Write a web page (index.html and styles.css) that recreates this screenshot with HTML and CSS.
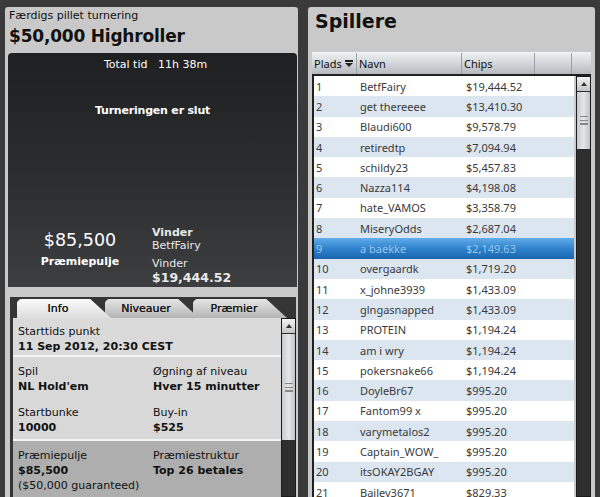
FILE: index.html
```html
<!doctype html>
<html lang="da">
<head>
    <meta charset="UTF-8">
    <title>$50,000 Highroller</title>
    <link rel="stylesheet" href="styles.css">
</head>
<body>
<div class="app">
    <div class="left">
        <div class="head">
            <div class="status">Færdigs pillet turnering</div>
            <h1>$50,000 Highroller</h1>
        </div>
        <div class="board">
            <div class="total">Total tid&nbsp;&nbsp; 11h 38m</div>
            <div class="over">Turneringen er slut</div>
            <div class="result">
                <div class="pool">
                    <div class="amount">$85,500</div>
                    <div class="b">Præmiepulje</div>
                </div>
                <div class="winner">
                    <div class="b">Vinder</div>
                    <div>BetfFairy</div>
                    <div class="gap">Vinder</div>
                    <div class="b big">$19,444.52</div>
                </div>
            </div>
        </div>
        <div class="tabs">
            <div class="tab active">Info</div>
            <div class="tab">Niveauer</div>
            <div class="tab">Præmier</div>
        </div>
        <div class="info">
            <div class="sections">
                <div class="sec first">
                    <div class="cell">
                        <span>Starttids punkt</span>
                        <b>11 Sep 2012, 20:30 CEST</b>
                    </div>
                </div>
                <div class="sec grid">
                    <div class="cell"><span>Spil</span><b>NL Hold'em</b></div>
                    <div class="cell"><span>Øgning af niveau</span><b>Hver 15 minutter</b></div>
                    <div class="cell"><span>Startbunke</span><b>10000</b></div>
                    <div class="cell"><span>Buy-in</span><b>$525</b></div>
                </div>
                <div class="sec grid dark">
                    <div class="cell"><span>Præmiepulje</span><b>$85,500</b><span>($50,000 guaranteed)</span></div>
                    <div class="cell"><span>Præmiestruktur</span><b>Top 26 betales</b></div>
                </div>
            </div>
            <div class="scroll small">
                <div class="up"></div>
                <div class="thumb"><i></i></div>
            </div>
        </div>
    </div>
    <div class="right">
        <h2>Spillere</h2>
        <div class="table">
            <div class="thead">
                <div class="th c1">Plads <span class="sort"></span></div>
                <div class="th c2">Navn</div>
                <div class="th c3">Chips</div>
                <div class="th c4"></div>
                <div class="th c5"></div>
            </div>
            <div class="tbody">
                <div class="rows" id="rows"></div>
                <div class="scroll">
                    <div class="up"></div>
                    <div class="thumb"><i></i></div>
                </div>
            </div>
        </div>
    </div>
</div>
<script>
    let players = [
        ["BetfFairy", "$19,444.52"], ["get thereeee", "$13,410.30"], ["Blaudi600", "$9,578.79"],
        ["retiredtp", "$7,094.94"], ["schildy23", "$5,457.83"], ["Nazza114", "$4,198.08"],
        ["hate_VAMOS", "$3,358.79"], ["MiseryOdds", "$2,687.04"], ["a baekke", "$2,149.63"],
        ["overgaardk", "$1,719.20"], ["x_johne3939", "$1,433.09"], ["glngasnapped", "$1,433.09"],
        ["PROTEIN", "$1,194.24"], ["am i wry", "$1,194.24"], ["pokersnake66", "$1,194.24"],
        ["DoyleBr67", "$995.20"], ["Fantom99 x", "$995.20"], ["varymetalos2", "$995.20"],
        ["Captain_WOW_", "$995.20"], ["itsOKAY2BGAY", "$995.20"], ["Bailey3671", "$829.33"]
    ];
    let rows = document.getElementById("rows");
    for (let i = 0; i < players.length; i++) {
        let cls = "row";
        if (i % 2 === 1) cls += " alt";
        if (i === 8) cls += " sel";
        rows.innerHTML += `<div class="${cls}"><span class="c1">${i + 1}</span><span class="c2">${players[i][0]}</span><span class="c3">${players[i][1]}</span></div>`;
    }
</script>
</body>
</html>
```

FILE: styles.css
```css
* {
    box-sizing: border-box;
}

body {
    margin: 0;
    background: #3a3a3a;
    font-family: "DejaVu Sans", Verdana, sans-serif;
    color: #111;
}

.app {
    display: flex;
    gap: 10px;
    padding: 7px 5px 0 5px;
    height: 497px;
    overflow: hidden;
}

.left {
    width: 293px;
    background: #c9c9c9;
    border-radius: 3px 3px 0 0;
    display: flex;
    flex-direction: column;
}

.head {
    padding: 2px 4px 0 4px;
    height: 46px;
}

.status {
    font-size: 11px;
    line-height: 14px;
}

h1 {
    margin: 0;
    font-size: 17px;
    font-weight: bold;
    letter-spacing: -0.2px;
    line-height: 26px;
}

.board {
    margin: 0 1px 0 3px;
    height: 234px;
    border-radius: 4px 4px 0 0;
    background: linear-gradient(#1f2021, #2b2c2e 50%, #3d3e40);
    color: #fff;
    display: flex;
    flex-direction: column;
    font-size: 11px;
}

.total {
    text-align: center;
    padding-top: 5px;
    padding-left: 6px;
}

.over {
    text-align: center;
    font-weight: bold;
    margin-top: 33px;
    letter-spacing: -0.2px;
}

.result {
    margin-top: auto;
    display: flex;
    padding-bottom: 1px;
}

.pool {
    width: 144px;
    text-align: center;
    padding-top: 4px;
}

.amount {
    font-size: 17.5px;
    line-height: 20px;
}

.pool .b {
    margin-top: 5px;
}

.b {
    font-weight: bold;
}

.winner {
    color: #e8e8e8;
    line-height: 13px;
}

.winner .gap {
    margin-top: 5px;
}

.winner .big {
    font-size: 12.5px;
    line-height: 16px;
}

.tabs {
    margin: 10px 2px 0 5px;
    height: 21px;
    background: #353535;
    display: flex;
    padding-left: 7px;
    padding-top: 2px;
}

.tab {
    width: 94px;
    margin-right: -6px;
    font-size: 11px;
    text-align: center;
    padding-top: 3px;
    padding-right: 12px;
    color: #1a1a1a;
    text-shadow: 0 0 0.4px #1a1a1a;
    background: linear-gradient(#e6e6e6, #b4b4b4);
    clip-path: polygon(0 3px, 3px 0, 78% 0, 100% 100%, 0 100%);
    border-radius: 4px 0 0 0;
}

.tab.active {
    background: linear-gradient(#fafafa, #dedede);
    position: relative;
    z-index: 1;
}

.info {
    flex: 1;
    margin: 0 2px 0 5px;
    border-left: 3px solid #353535;
    display: flex;
    min-height: 0;
}

.sections {
    flex: 1;
    display: flex;
    flex-direction: column;
}

.sec {
    padding: 6px 0 0 5px;
    font-size: 11px;
    border-bottom: 2px solid #f4f4f4;
    background: #d8d8d8;
}

.sec.first {
    height: 39px;
    background: #dadada;
}

.grid {
    display: grid;
    grid-template-columns: 135px 1fr;
    row-gap: 6px;
    height: 84px;
    padding-top: 7px;
}

.sec.dark {
    background: #aeaeae;
    flex: 1;
    border-bottom: 0;
}

.cell {
    display: flex;
    flex-direction: column;
    line-height: 15px;
}

.scroll {
    width: 15px;
    background: #2e2e2e;
    border: 1px solid #1b1b1b;
    display: flex;
    flex-direction: column;
    gap: 1px;
}

.up {
    height: 14px;
    background: linear-gradient(#f2f2f2, #c4c4c4);
    position: relative;
}

.up::after {
    content: "";
    position: absolute;
    left: 4px;
    top: 5px;
    border: 3px solid transparent;
    border-bottom: 4px solid #333;
    border-top: 0;
}

.thumb {
    height: 57px;
    background: linear-gradient(90deg, #c8cacc, #e4e6e8 50%, #c0c2c4);
    display: flex;
    align-items: center;
    justify-content: center;
}

.small .thumb {
    height: 106px;
}

.thumb i {
    width: 8px;
    height: 9px;
    border-top: 1px solid #888;
    border-bottom: 1px solid #888;
    background: linear-gradient(#fff0 3px, #888 3px, #888 4px, #fff0 4px, #fff0 6px, #888 6px, #888 7px, #fff0 7px);
}

.right {
    width: 287px;
    background: #c9c9c9;
    border-radius: 3px 3px 0 0;
    display: flex;
    flex-direction: column;
    padding: 0 4px 0 4px;
}

h2 {
    margin: 0;
    font-size: 19px;
    line-height: 28px;
    padding-left: 3px;
    height: 45px;
}

.table {
    flex: 1;
    display: flex;
    flex-direction: column;
    border-top: 1px solid #f2f2f2;
    min-height: 0;
}

.thead {
    display: flex;
    height: 23px;
    background: linear-gradient(#eef0f2, #d2d6da 50%, #b6babe);
    border-bottom: 2px solid #202020;
    font-family: "Noto Sans", "DejaVu Sans", sans-serif;
    font-size: 11px;
    color: #111;
}

.th {
    border-right: 1px solid #9aa0a6;
    padding: 3px 0 0 2px;
}

.c1 {
    width: 45px;
}

.c2 {
    width: 105px;
}

.c3 {
    width: 73px;
}

.c4 {
    width: 37px;
}

.c5 {
    flex: 1;
    border-right: 0;
}

.sort {
    display: inline-block;
    width: 8px;
    height: 7px;
    border-top: 2px solid #222;
    vertical-align: 1px;
    position: relative;
}

.sort::after {
    content: "";
    position: absolute;
    left: 0;
    top: 1px;
    border: 4px solid transparent;
    border-top: 4px solid #222;
    border-bottom: 0;
}

.tbody {
    flex: 1;
    display: flex;
    border-left: 2px solid #202020;
    min-height: 0;
}

.rows {
    flex: 1;
    background: #fff;
    font-family: "Noto Sans", "DejaVu Sans", sans-serif;
    font-size: 11px;
    color: #3a3a3a;
}

.row {
    display: flex;
    height: 20.3px;
    align-items: center;
}

.row span {
    padding-left: 2px;
}

.row .c2 {
    padding-left: 1px;
}

.row .c3 {
    width: 90px;
}

.row.alt {
    background: #dce6f0;
}

.row.sel {
    background: linear-gradient(#62adea, #2f82cc 50%, #1b66b0);
    color: #9cc4e6;
}

.tbody .scroll {
    margin-left: 2px;
}
```
